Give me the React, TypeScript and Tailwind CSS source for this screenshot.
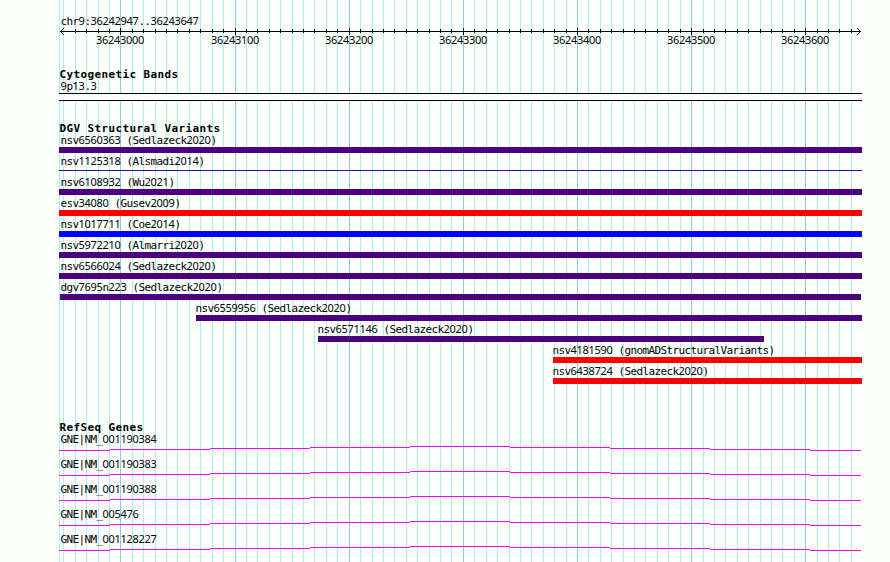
import React from "react";

const START = 59;
const gridLines = [
  59, 63, 75, 86, 98, 109, 120, 132, 143, 155, 166, 177, 189, 200, 212, 223, 235, 246, 257, 269,
  280, 292, 303, 314, 326, 337, 349, 360, 372, 383, 394, 406, 417, 429, 440, 451, 463, 474, 486,
  497, 509, 520, 531, 543, 554, 566, 577, 588, 600, 611, 623, 634, 645, 657, 668, 680, 691, 703,
  714, 725, 737, 748, 760, 771, 782, 794, 805, 817, 828, 839, 851,
];
const majorLines = [120, 235, 349, 463, 577, 691, 805];

type Variant = { label: string; start: number; end: number; color: string; thin?: boolean };

const variants: Variant[] = [
  { label: "nsv6560363 (Sedlazeck2020)", start: 59, end: 862, color: "bg-[#4b0082]" },
  { label: "nsv1125318 (Alsmadi2014)", start: 59, end: 862, color: "bg-[#4b0082]", thin: true },
  { label: "nsv6108932 (Wu2021)", start: 59, end: 862, color: "bg-[#4b0082]" },
  { label: "esv34080 (Gusev2009)", start: 59, end: 862, color: "bg-[#ff0000]" },
  { label: "nsv1017711 (Coe2014)", start: 59, end: 862, color: "bg-[#0000ff]" },
  { label: "nsv5972210 (Almarri2020)", start: 59, end: 862, color: "bg-[#4b0082]" },
  { label: "nsv6566024 (Sedlazeck2020)", start: 59, end: 862, color: "bg-[#4b0082]" },
  { label: "dgv7695n223 (Sedlazeck2020)", start: 60, end: 861, color: "bg-[#4b0082]" },
  { label: "nsv6559956 (Sedlazeck2020)", start: 196, end: 862, color: "bg-[#4b0082]" },
  { label: "nsv6571146 (Sedlazeck2020)", start: 318, end: 764, color: "bg-[#4b0082]" },
  { label: "nsv4181590 (gnomADStructuralVariants)", start: 553, end: 862, color: "bg-[#ff0000]" },
  { label: "nsv6438724 (Sedlazeck2020)", start: 553, end: 862, color: "bg-[#ff0000]" },
];

const genes = [
  "GNE|NM_001190384",
  "GNE|NM_001190383",
  "GNE|NM_001190388",
  "GNE|NM_005476",
  "GNE|NM_001128227",
];

/* Six-pixel cells: letters in the monospaced face, digits in a face with a plain zero. */
function Label({ children }: { children: string }) {
  return (
    <span className="block h-3 whitespace-pre font-['DejaVu_Sans_Mono',monospace] text-[11px] leading-3 tracking-[-0.622px]">
      {children.split(/(\d+)/).map((part, i) =>
        /^\d/.test(part) ? (
          <span key={i} className="font-['Noto_Sans',sans-serif] tracking-[-0.292px]">
            {part}
          </span>
        ) : (
          part
        ),
      )}
    </span>
  );
}

function Heading({ children }: { children: string }) {
  return (
    <h2 className="h-3 whitespace-pre pl-[0.4px] font-['DejaVu_Sans_Mono',monospace] text-[11px] font-bold leading-[14px] tracking-[0.378px]">
      {children}
    </h2>
  );
}

function Grid() {
  return (
    <svg className="absolute inset-0" width="890" height="562" shapeRendering="crispEdges">
      {gridLines.map((x) => (
        <rect key={x} x={x} y="0" width="1" height="562" fill={majorLines.includes(x) ? "#87ceeb" : "#afeeee"} />
      ))}
    </svg>
  );
}

function Axis() {
  return (
    <svg className="block" width="803" height="7" viewBox="59 28 803 7" shapeRendering="crispEdges">
      <rect x="60" y="31" width="801" height="1" />
      {gridLines.slice(2).map((x) => {
        const major = majorLines.includes(x);
        return <rect key={x} x={x} y={major ? 28 : 29} width="1" height={major ? 7 : 4} />;
      })}
      {[1, 2, 3].map((d) => (
        <g key={d}>
          <rect x={60 + d} y={31 - d} width="1" height="1" />
          <rect x={60 + d} y={31 + d} width="1" height="1" />
          <rect x={860 - d} y={31 - d} width="1" height="1" />
          <rect x={860 - d} y={31 + d} width="1" height="1" />
        </g>
      ))}
    </svg>
  );
}

function Intron() {
  return (
    <svg className="block" width="802" height="5" viewBox="59 446 802 5" shapeRendering="crispEdges" fill="#ff00ff">
      {[59, 110, 210, 310, 410, 510, 610, 710, 810].map((x, i, all) => (
        <rect key={x} x={x} y={446 + Math.abs(4 - i)} width={(all[i + 1] ?? 861) - x} height="1" />
      ))}
    </svg>
  );
}

export default function App() {
  return (
    <main className="relative h-[562px] w-[890px] overflow-hidden bg-[#fdfffc] text-black">
      <Grid />
      <div className="relative w-[862px] pl-[59px] pt-[15px]">
        <section>
          <div className="pl-[1.4px]">
            <Label>chr9:36242947..36243647</Label>
          </div>
          <div className="mt-px">
            <Axis />
          </div>
          <div className="-ml-[21px] -mt-px flex">
            {majorLines.map((x, i) => (
              <div key={x} className={i === 0 ? "w-[115px] shrink-0 pl-[58px]" : "w-[114px] shrink-0 pl-[58px]"}>
                <Label>{`36243${i}00`}</Label>
              </div>
            ))}
          </div>
        </section>

        <section className="mt-[22px]">
          <Heading>Cytogenetic Bands</Heading>
          <div className="pl-[1.4px]">
            <Label>9p13.3</Label>
          </div>
          <div className="mt-px h-2 border-y border-black bg-[#fdfffc]" />
        </section>

        <section className="mt-[21px]">
          <Heading>DGV Structural Variants</Heading>
          {variants.map((v) => (
            <div key={v.label} className="h-[21px]">
              <div style={{ paddingLeft: Math.max(1.4, v.start - START - 0.6) }}>
                <Label>{v.label}</Label>
              </div>
              <div className={v.thin ? "pt-[3px]" : "pt-px"}>
                <div
                  className={`${v.color} ${v.thin ? "h-px" : "h-1.5"}`}
                  style={{ marginLeft: v.start - START, width: v.end - v.start }}
                />
              </div>
            </div>
          ))}
        </section>

        <section className="mt-[35px]">
          <Heading>RefSeq Genes</Heading>
          {genes.map((g) => (
            <div key={g} className="h-[25px]">
              <div className="pl-[1.4px]">
                <Label>{g}</Label>
              </div>
              <div className="pt-px">
                <Intron />
              </div>
            </div>
          ))}
        </section>
      </div>
    </main>
  );
}
